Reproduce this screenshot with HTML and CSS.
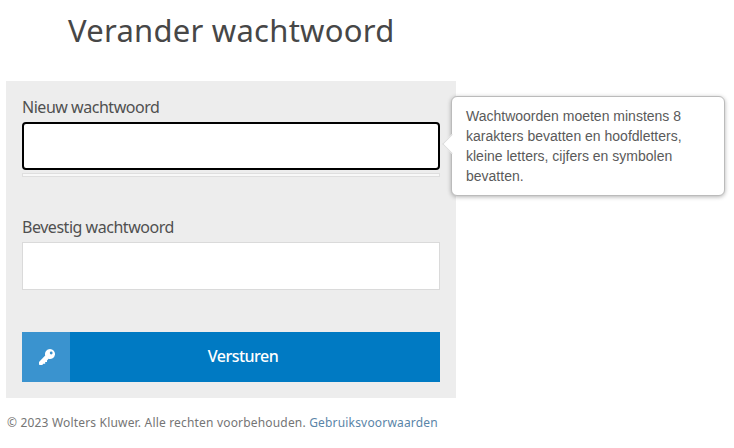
FILE: index.html
```
<!DOCTYPE html>
<html lang="nl">
<head>
<meta charset="utf-8">
<title>Verander wachtwoord</title>
<link rel="stylesheet" href="styles.css">
</head>
<body>
<main class="page">
  <h1 class="title">Verander wachtwoord</h1>
  <form class="panel">
    <div class="field">
      <label class="label" for="new">Nieuw wachtwoord</label>
      <input class="input input-focus" id="new" type="password">
      <div class="meter"></div>
    </div>
    <div class="field field-confirm">
      <label class="label" for="confirm">Bevestig wachtwoord</label>
      <input class="input" id="confirm" type="password">
    </div>
    <button class="submit" type="button">
      <span class="submit-icon">
        <svg class="key" viewBox="0 0 16 16" width="16" height="16" aria-hidden="true">
          <path d="M11 0a5 5 0 1 1-1.4 9.8L8 11.4V13H6.2v1.8H4.4L3.2 16H.6L0 15.400V13l6.200-6.600A5 5 0 0 1 11 0zM12.200 2.600a1.400 1.400 0 1 1 0 2.800 1.400 1.400 0 0 1 0-2.800z" fill="#fff" fill-rule="evenodd"/>
        </svg>
      </span>
      <span class="submit-text">Versturen</span>
    </button>
    <div class="tooltip">Wachtwoorden moeten minstens 8 karakters bevatten en hoofdletters, kleine letters, cijfers en symbolen bevatten.</div>
  </form>
  <footer class="footer">© 2023 Wolters Kluwer. Alle rechten voorbehouden. <a class="link" href="#">Gebruiksvoorwaarden</a></footer>
</main>
</body>
</html>
```
FILE: styles.css
```
* { box-sizing: border-box; }
html, body { margin: 0; padding: 0; background: #fff; }
body { width: 734px; height: 448px; overflow: hidden; font-family: "Noto Sans", "Open Sans", sans-serif; color: #474747; }
.page { padding: 0 0 0 6px; }
.title { margin: 0; padding: 9px 0 0 62px; height: 81px; font-size: 31px; line-height: 43px; font-weight: 400; color: #474747; letter-spacing: 0.25px; }
.panel { position: relative; width: 450px; height: 317px; background: #ededed; padding: 16px; }
.field { display: flex; flex-direction: column; }
.field-confirm { margin-top: 40px; }
.label { font-size: 16px; letter-spacing: -0.47px; line-height: 20px; height: 25px; color: #505050; }
.input { display: block; width: 100%; height: 48px; background: #fff; border: 1px solid #dadada; outline: none; padding: 0 10px; }
.input-focus { border: 2px solid #000; border-radius: 4px; }
.meter { margin-top: 3px; height: 4px; background: #f8f8f8; border: 1px solid #dedede; }
.submit { display: flex; width: 100%; height: 50px; margin-top: 42px; padding: 0; border: 0; background: #007ac3; color: #fff; font-family: inherit; cursor: pointer; }
.submit-icon { display: flex; align-items: center; justify-content: center; width: 48px; height: 50px; padding: 0 0 0 2px; background: #3a93cf; }
.submit-text { flex: 1; font-size: 16px; letter-spacing: -0.5px; font-weight: 500; line-height: 49px; text-align: center; padding-right: 24px; }
.tooltip { position: absolute; left: 445px; top: 15px; width: 274px; height: 100px; padding: 9px 14px; background: #fff; border: 1px solid #bbb; border-radius: 6px; box-shadow: 0 1px 4px rgba(0,0,0,0.3); font-family: "Liberation Sans", Arial, sans-serif; font-size: 14px; line-height: 20px; color: #5a5a5a; }
.tooltip::before { content: ""; position: absolute; left: -7px; top: 40px; width: 13px; height: 13px; background: #fff; transform: rotate(45deg); border-left: 1px solid #dcdcdc; border-bottom: 1px solid #dcdcdc; }
.footer { margin-top: 16px; padding-left: 1px; font-size: 12px; line-height: 18px; color: #757575; letter-spacing: 0.18px; }
.link { color: #5a85a8; text-decoration: none; }
```
